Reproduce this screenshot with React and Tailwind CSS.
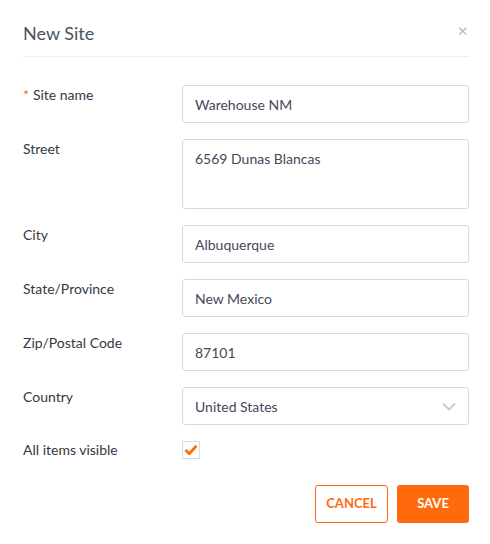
import React from "react";

const Row = ({ label, required, children, top = "pt-0" }) => (
  <div className="flex">
    <div className={`w-[159px] shrink-0 ${top} text-[14px] leading-[20px] text-[#333a44]`}>
      {required && <span className="text-[#f56b3a] mr-1">*</span>}
      {label}
    </div>
    <div className="flex-1">{children}</div>
  </div>
);

const Input = ({ value }) => (
  <div className="h-[38px] rounded-[3px] border border-[#d6dbe1] px-3 flex items-center text-[14px] text-[#48475a]">
    {value}
  </div>
);

export default function App() {
  return (
    <div
      className="w-[490px] h-[544px] bg-white pl-[23px] pr-[21px] pt-[20px]"
      style={{ fontFamily: '"Source Sans Pro", Lato, "Open Sans", sans-serif' }}
    >
      <div className="flex items-start justify-between border-b border-[#eceef1] pb-[10px]">
        <h1 className="text-[18px] text-[#4a5360] leading-[26px]">New Site</h1>
        <span className="text-[#b5b9bf] text-[18px] leading-none mr-[1px] mt-[1px]">×</span>
      </div>

      <div className="flex flex-col gap-[16px] mt-[28px]">
        <Row label="Site name" required>
          <Input value="Warehouse NM" />
        </Row>
        <Row label="Street">
          <div className="h-[70px] rounded-[3px] border border-[#d6dbe1] px-3 pt-[8px] text-[14px] text-[#48475a]">
            6569 Dunas Blancas
          </div>
        </Row>
        <Row label="City">
          <Input value="Albuquerque" />
        </Row>
        <Row label="State/Province">
          <Input value="New Mexico" />
        </Row>
        <Row label="Zip/Postal Code">
          <Input value="87101" />
        </Row>
        <Row label="Country">
          <div className="h-[38px] rounded-[3px] border border-[#d6dbe1] px-3 flex items-center justify-between text-[14px] text-[#48475a]">
            <span>United States</span>
            <svg width="14" height="9" viewBox="0 0 14 9" fill="none">
              <path d="M1 1.5l6 6 6-6" stroke="#c7ccd2" strokeWidth="2" />
            </svg>
          </div>
        </Row>
        <div className="flex items-center -mt-[1px]">
          <div className="w-[159px] shrink-0 text-[14px] leading-[20px] text-[#333a44]">All items visible</div>
          <div className="w-[18px] h-[18px] border border-[#d6dbe1] flex items-center justify-center">
            <svg width="14" height="12" viewBox="0 0 14 12" fill="none">
              <path d="M1.5 6l3.8 3.8 7.2-8" stroke="#ff6a0d" strokeWidth="2.8" strokeLinejoin="round" />
            </svg>
          </div>
        </div>
      </div>

      <div className="flex justify-end gap-[9px] mt-[25px]">
        <button className="w-[73px] h-[38px] rounded-[3px] border border-[#ff6a0d] text-[#ff6a0d] text-[13px] font-bold">
          CANCEL
        </button>
        <button className="w-[72px] h-[38px] rounded-[3px] bg-[#ff6a0d] text-white text-[13px] font-bold">
          SAVE
        </button>
      </div>
    </div>
  );
}
